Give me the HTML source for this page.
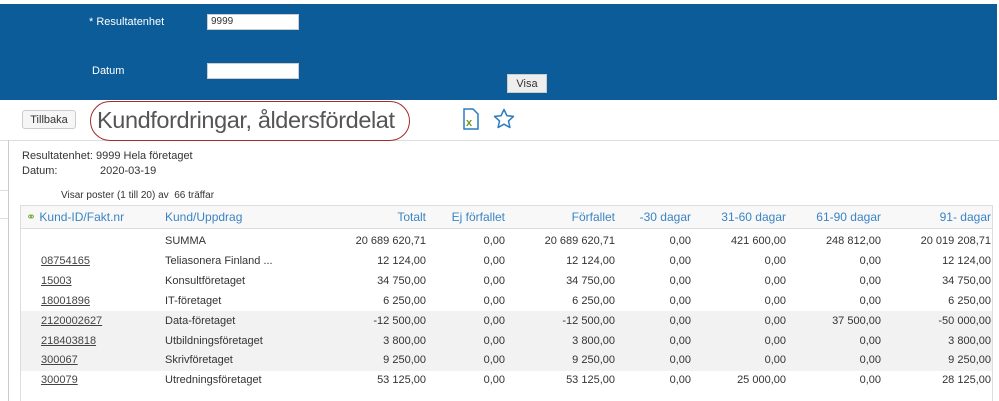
<!DOCTYPE html>
<html><head><meta charset="utf-8"><style>
*{margin:0;padding:0;box-sizing:border-box}
body{width:999px;height:401px;overflow:hidden;background:#fff;font-family:"Liberation Sans",sans-serif;color:#333;position:relative}
.banner{position:absolute;left:0;top:4px;width:997px;height:96px;background:#0b5c99}
.lbl{position:absolute;color:#fff;font-size:11px}
.inp{position:absolute;background:#fff;border:1px solid #ccc;height:16px;width:92px;font-size:10px;color:#333;padding:1px 3px}
.visa{position:absolute;left:507px;top:74px;width:40px;height:19px;background:#eee;border:1px solid #ccc;font-size:11px;color:#333;text-align:center;line-height:18px}
.back{position:absolute;left:22px;top:110px;width:54px;height:19px;border:1px solid #ccc;border-radius:3px;background:#f6f6f6;font-size:11px;text-align:center;line-height:18px}
.title{position:absolute;left:97px;top:107px;font-size:23.5px;color:#555;font-weight:300;letter-spacing:-0.4px}
.oval{position:absolute;left:90px;top:101px;width:320px;height:40px;border:1.5px solid #a52a2a;border-radius:20px}
.t{position:absolute;font-size:11px;color:#333;white-space:nowrap}
.h{color:#3a84c4;font-size:12px}
.u{text-decoration:underline;color:#444}
.gray{position:absolute;left:21px;width:971px;height:60px;top:311px;background:#f2f2f2}
</style></head><body>
<div class="banner"></div>
<div class="lbl" style="left:89px;top:16px">* Resultatenhet</div>
<div class="inp" style="left:207px;top:14px">9999</div>
<div class="lbl" style="left:92px;top:65px">Datum</div>
<div class="inp" style="left:207px;top:63px"></div>
<div class="visa">Visa</div>
<div style="position:absolute;left:0;top:140px;width:999px;height:1px;background:#ddd"></div>
<div style="position:absolute;left:8px;top:140px;width:1px;height:261px;background:#ccc"></div>
<div style="position:absolute;left:0;top:190px;width:8px;height:1px;background:#ddd"></div>
<div style="position:absolute;left:0;top:218px;width:8px;height:1px;background:#ddd"></div>
<div class="back">Tillbaka</div>
<div class="title">Kundfordringar, åldersfördelat</div>
<div class="oval"></div>
<svg style="position:absolute;left:462px;top:108px" width="18" height="22" viewBox="0 0 18 22"><path d="M2 1h9l5 5v15H2z" fill="#fff" stroke="#2a7bbf" stroke-width="1.5"/><text x="4" y="18" font-size="11" font-weight="bold" fill="#6a9a1f" font-family="Liberation Sans">x</text></svg>
<svg style="position:absolute;left:493px;top:108px" width="22" height="22" viewBox="0 0 22 22"><path d="M11 1.5l2.9 6.2 6.6.7-5 4.5 1.4 6.6L11 16.2l-5.9 3.3 1.4-6.6-5-4.5 6.6-.7z" fill="none" stroke="#2a7bbf" stroke-width="1.5" stroke-linejoin="round"/></svg>
<div class="t" style="left:22px;top:150px">Resultatenhet: 9999 Hela företaget</div>
<div class="t" style="left:22px;top:165px">Datum:</div>
<div class="t" style="left:100px;top:165px">2020-03-19</div>
<div class="t" style="left:61px;top:190px;font-size:10px">Visar poster (1 till 20) av &nbsp;66 träffar</div>
<div style="position:absolute;left:20px;top:205px;width:973px;height:196px;border:1px solid #ddd;border-bottom:none"></div>
<div style="position:absolute;left:21px;top:206px;width:971px;height:23px;background:#f8f8f8;border-bottom:1px solid #ddd"></div>
<div class="gray"></div>
<div class="t h" style="left:26px;top:210px"><span style="color:#7aa83a">⚭</span> Kund-ID/Fakt.nr</div>
<div class="t h" style="left:165px;top:210px">Kund/Uppdrag</div>
<div id="rows"></div>
<script>
var rights=[426,505,615,691,786,881,991];
var hdr=["Totalt","Ej förfallet","Förfallet","-30 dagar","31-60 dagar","61-90 dagar","91- dagar"];
var rows=[["","SUMMA","20 689 620,71","0,00","20 689 620,71","0,00","421 600,00","248 812,00","20 019 208,71"],
["08754165","Teliasonera Finland ...","12 124,00","0,00","12 124,00","0,00","0,00","0,00","12 124,00"],
["15003","Konsultföretaget","34 750,00","0,00","34 750,00","0,00","0,00","0,00","34 750,00"],
["18001896","IT-företaget","6 250,00","0,00","6 250,00","0,00","0,00","0,00","6 250,00"],
["2120002627","Data-företaget","-12 500,00","0,00","-12 500,00","0,00","0,00","37 500,00","-50 000,00"],
["218403818","Utbildningsföretaget","3 800,00","0,00","3 800,00","0,00","0,00","0,00","3 800,00"],
["300067","Skrivföretaget","9 250,00","0,00","9 250,00","0,00","0,00","0,00","9 250,00"],
["300079","Utredningsföretaget","53 125,00","0,00","53 125,00","0,00","25 000,00","0,00","28 125,00"]];
var h="";
hdr.forEach(function(s,i){h+='<div class="t h" style="right:'+(999-rights[i])+'px;top:210px">'+s+'</div>';});
rows.forEach(function(r,j){var y=235+j*19.9;
h+='<div class="t u" style="left:41px;top:'+y+'px">'+r[0]+'</div>';
h+='<div class="t" style="left:165px;top:'+y+'px">'+r[1]+'</div>';
for(var i=0;i<7;i++)h+='<div class="t" style="right:'+(999-rights[i])+'px;top:'+y+'px">'+r[i+2]+'</div>';});
document.getElementById("rows").innerHTML=h;
</script>
</body></html>
